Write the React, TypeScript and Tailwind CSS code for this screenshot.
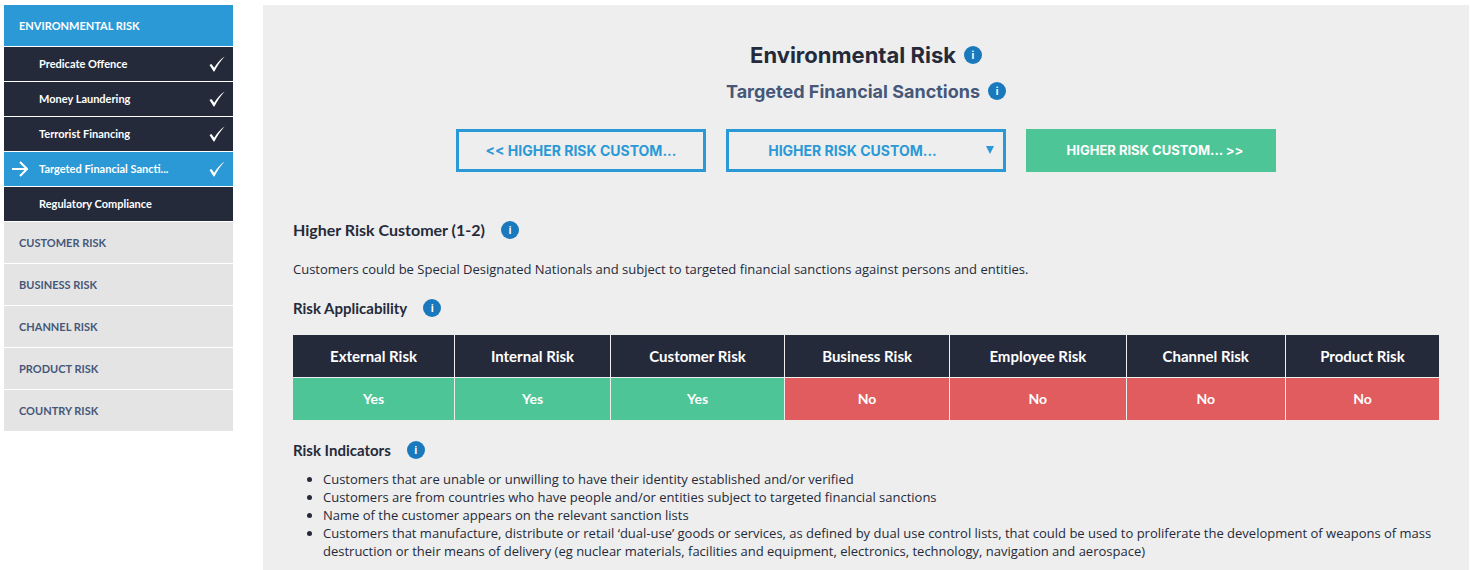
import type { ReactNode } from "react";

const riskSteps = [
  { title: "Predicate Offence", done: true },
  { title: "Money Laundering", done: true },
  { title: "Terrorist Financing", done: true },
  { title: "Targeted Financial Sancti...", done: true, current: true },
  { title: "Regulatory Compliance", done: false },
];

const riskSections = [
  "Customer Risk",
  "Business Risk",
  "Channel Risk",
  "Product Risk",
  "Country Risk",
];

const applicability = [
  { risk: "External Risk", applies: true, width: "w-[14.1%]" },
  { risk: "Internal Risk", applies: true, width: "w-[13.6%]" },
  { risk: "Customer Risk", applies: true, width: "w-[15.2%]" },
  { risk: "Business Risk", applies: false, width: "w-[14.4%]" },
  { risk: "Employee Risk", applies: false, width: "w-[15.4%]" },
  { risk: "Channel Risk", applies: false, width: "w-[13.9%]" },
  { risk: "Product Risk", applies: false, width: "w-[13.4%]" },
];

const indicators = [
  "Customers that are unable or unwilling to have their identity established and/or verified",
  "Customers are from countries who have people and/or entities subject to targeted financial sanctions",
  "Name of the customer appears on the relevant sanction lists",
  "Customers that manufacture, distribute or retail ‘dual-use’ goods or services, as defined by dual use control lists, that could be used to proliferate the development of weapons of mass destruction or their means of delivery (eg nuclear materials, facilities and equipment, electronics, technology, navigation and aerospace)",
];

const CheckIcon = () => (
  <svg viewBox="0 0 16 16" className="w-4 h-4 shrink-0" aria-hidden="true">
    <path d="M0.5 9 2.4 8 5.2 11.8C8 7.2 11.4 3.2 15.6 0.4 11.6 4.8 8.2 9.8 5.4 15.6H4.6Z" fill="#fff" />
  </svg>
);

const ArrowIcon = () => (
  <svg viewBox="0 0 16 16" className="w-4 h-4" aria-hidden="true">
    <path d="M0 8H15M8 1l7 7-7 7" fill="none" stroke="#fff" strokeWidth="2" />
  </svg>
);

const InfoButton = ({ about }: { about: string }) => (
  <button
    aria-label={`About ${about}`}
    className="flex justify-center items-center bg-[#1a78bc] rounded-full w-[18px] h-[18px] font-bold text-[10px] text-white leading-none shrink-0"
  >
    i
  </button>
);

const SectionTitle = ({ children, about }: { children: ReactNode; about: string }) => (
  <div className="flex items-center gap-4 h-5">
    <h4 className="font-['Lato',sans-serif] font-bold text-[15px] leading-5">{children}</h4>
    <InfoButton about={about} />
  </div>
);

const Sidebar = () => (
  <nav className="flex flex-col gap-px w-[229px] font-['Lato',sans-serif] font-bold text-[11px] shrink-0">
    <a href="#environmental-risk" className="flex items-center bg-[#2b99d6] pt-0.5 px-[15px] h-[41px] text-white uppercase">
      Environmental Risk
    </a>
    {riskSteps.map((step) => (
      <a
        key={step.title}
        href="#step"
        className={`flex items-center pr-2 h-[34px] text-white ${step.current ? "bg-[#2b99d6]" : "bg-[#252a3a]"}`}
      >
        <span className="flex pl-2 w-[35px] shrink-0">{step.current && <ArrowIcon />}</span>
        <span className="flex-1 whitespace-nowrap">{step.title}</span>
        {step.done && <CheckIcon />}
      </a>
    ))}
    {riskSections.map((section) => (
      <a
        key={section}
        href="#section"
        className="flex items-center bg-[#e4e4e4] pt-0.5 px-[15px] h-[41px] text-[#465779] uppercase"
      >
        {section}
      </a>
    ))}
  </nav>
);

const StepButtons = () => (
  <div className="flex justify-center gap-5 mt-6 font-['Inter',sans-serif] font-bold text-[14px]">
    <button className="border-[#2b99d6] border-3 w-[250px] h-[43px] text-[#2b99d6]">
      &lt;&lt; HIGHER RISK CUSTOM...
    </button>
    <div className="relative w-[280px]">
      <select
        aria-label="Risk"
        className="border-[#2b99d6] border-3 pr-[27px] w-full h-[43px] text-[#2b99d6] text-center appearance-none"
        style={{ textAlignLast: "center" }}
      >
        <option>HIGHER RISK CUSTOM...</option>
      </select>
      <svg viewBox="0 0 8 8" className="top-[17px] right-3 absolute w-2 h-2 pointer-events-none" aria-hidden="true">
        <path d="M0 0h8L4 8Z" fill="#2b99d6" />
      </svg>
    </div>
    <button className="bg-[#4dc597] pl-2 w-[250px] h-[43px] text-[13px] text-white">
      HIGHER RISK CUSTOM... &gt;&gt;
    </button>
  </div>
);

const ApplicabilityTable = () => (
  <table className="mt-[17px] w-full font-['Lato',sans-serif] text-white text-center border-collapse table-fixed">
    <thead>
      <tr className="h-[42px] text-[15px]">
        {applicability.map(({ risk, width }) => (
          <th
            key={risk}
            className={`bg-[#252a3a] border-[#eee] border-r border-b last:border-r-0 font-bold ${width}`}
          >
            {risk}
          </th>
        ))}
      </tr>
    </thead>
    <tbody>
      <tr className="h-[43px] text-[14px]">
        {applicability.map(({ risk, applies }) => (
          <td
            key={risk}
            className={`border-[#eee] border-r last:border-r-0 font-bold ${applies ? "bg-[#4dc597]" : "bg-[#e15c5e]"}`}
          >
            {applies ? "Yes" : "No"}
          </td>
        ))}
      </tr>
    </tbody>
  </table>
);

export default function App() {
  return (
    <div className="flex items-start gap-[30px] bg-white pt-[5px] pr-0.5 pl-1 min-h-screen font-['Open_Sans',sans-serif] text-[#252a3a]">
      <Sidebar />
      <main className="flex-1 self-stretch bg-[#eee] px-[30px] pt-9 pb-1 min-w-0">
        <div className="flex justify-center items-center gap-2 h-7 font-['Inter',sans-serif]">
          <h1 className="font-bold text-[22px]">Environmental Risk</h1>
          <InfoButton about="environmental risk" />
        </div>
        <div className="flex justify-center items-center gap-2 mt-2 h-7 font-['Inter',sans-serif] text-[#465779]">
          <h2 className="font-bold text-[18px]">Targeted Financial Sanctions</h2>
          <InfoButton about="targeted financial sanctions" />
        </div>
        <StepButtons />
        <div className="flex items-center gap-4 mt-12 h-5">
          <h3 className="font-['Lato',sans-serif] font-bold text-[16px] leading-5">Higher Risk Customer (1-2)</h3>
          <InfoButton about="higher risk customer" />
        </div>
        <p className="my-5 text-[13px] leading-[18px]">
          Customers could be Special Designated Nationals and subject to targeted financial sanctions against persons
          and entities.
        </p>
        <SectionTitle about="risk applicability">Risk Applicability</SectionTitle>
        <ApplicabilityTable />
        <div className="mt-5">
          <SectionTitle about="risk indicators">Risk Indicators</SectionTitle>
        </div>
        <ul className="mt-2.5 pl-[30px] text-[13px] leading-[18px] list-disc">
          {indicators.map((indicator) => (
            <li key={indicator}>{indicator}</li>
          ))}
        </ul>
      </main>
    </div>
  );
}
